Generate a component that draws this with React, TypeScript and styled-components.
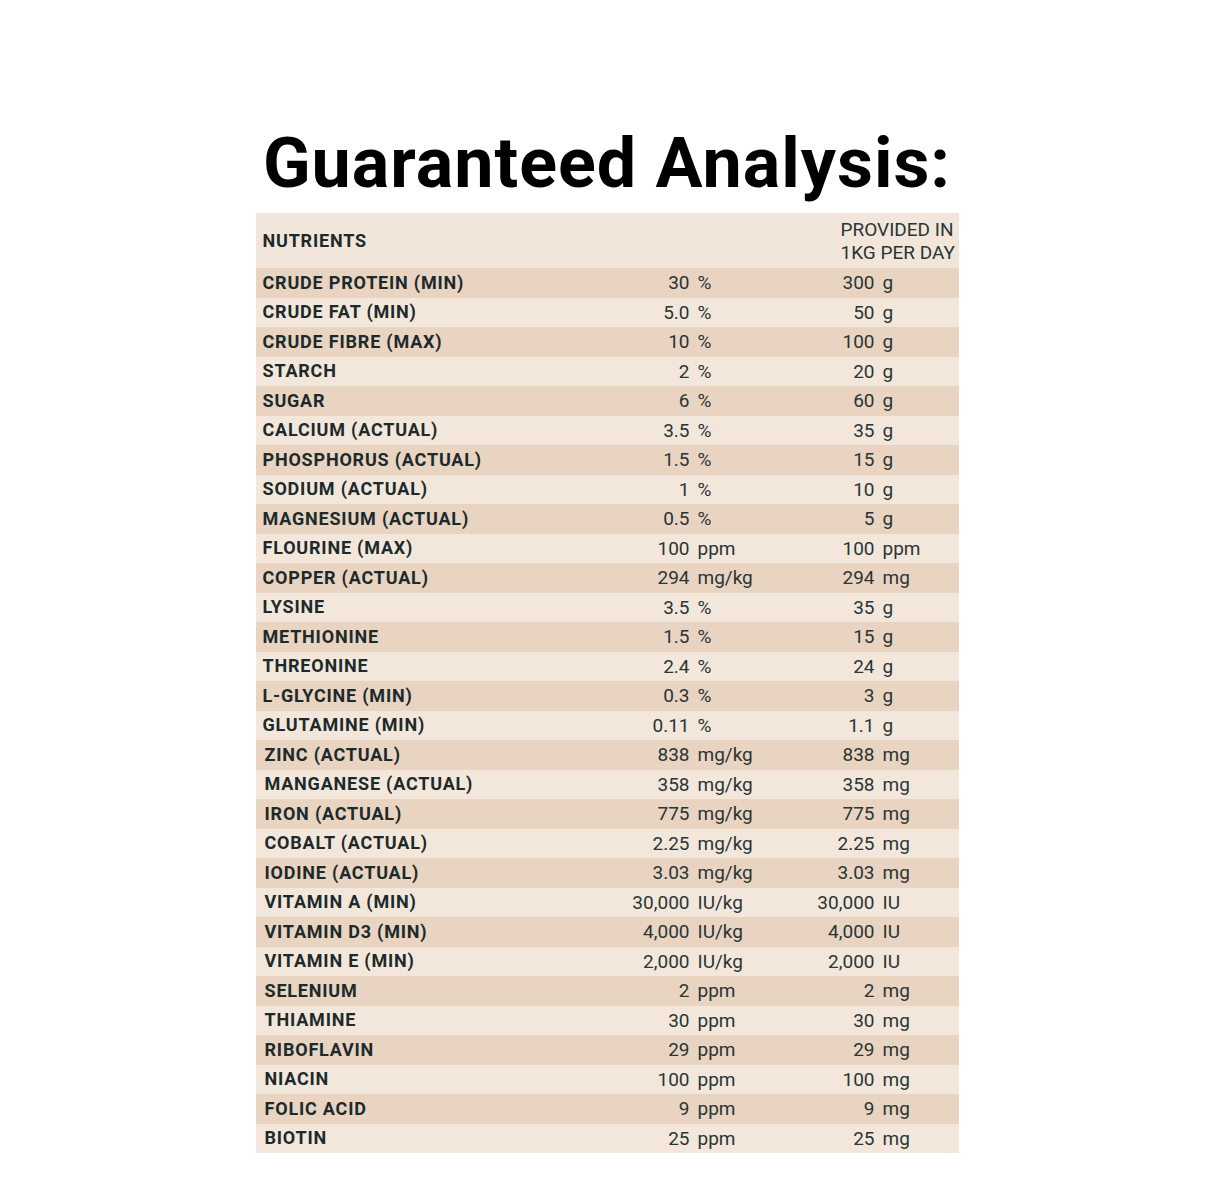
import styled, { createGlobalStyle } from 'styled-components';

const GlobalStyle = createGlobalStyle`
  html, body {
    margin: 0;
    padding: 0;
    background: #ffffff;
  }
  body {
    font-family: Roboto, 'Liberation Sans', sans-serif;
  }
`;

type Nutrient = {
  name: string;
  amount: string;
  unit: string;
  daily: string;
  dailyUnit: string;
};

const MAIN: Nutrient[] = [
  { name: 'CRUDE PROTEIN (MIN)', amount: '30', unit: '%', daily: '300', dailyUnit: 'g' },
  { name: 'CRUDE FAT (MIN)', amount: '5.0', unit: '%', daily: '50', dailyUnit: 'g' },
  { name: 'CRUDE FIBRE (MAX)', amount: '10', unit: '%', daily: '100', dailyUnit: 'g' },
  { name: 'STARCH', amount: '2', unit: '%', daily: '20', dailyUnit: 'g' },
  { name: 'SUGAR', amount: '6', unit: '%', daily: '60', dailyUnit: 'g' },
  { name: 'CALCIUM (ACTUAL)', amount: '3.5', unit: '%', daily: '35', dailyUnit: 'g' },
  { name: 'PHOSPHORUS (ACTUAL)', amount: '1.5', unit: '%', daily: '15', dailyUnit: 'g' },
  { name: 'SODIUM (ACTUAL)', amount: '1', unit: '%', daily: '10', dailyUnit: 'g' },
  { name: 'MAGNESIUM (ACTUAL)', amount: '0.5', unit: '%', daily: '5', dailyUnit: 'g' },
  { name: 'FLOURINE (MAX)', amount: '100', unit: 'ppm', daily: '100', dailyUnit: 'ppm' },
  { name: 'COPPER (ACTUAL)', amount: '294', unit: 'mg/kg', daily: '294', dailyUnit: 'mg' },
  { name: 'LYSINE', amount: '3.5', unit: '%', daily: '35', dailyUnit: 'g' },
  { name: 'METHIONINE', amount: '1.5', unit: '%', daily: '15', dailyUnit: 'g' },
  { name: 'THREONINE', amount: '2.4', unit: '%', daily: '24', dailyUnit: 'g' },
  { name: 'L-GLYCINE (MIN)', amount: '0.3', unit: '%', daily: '3', dailyUnit: 'g' },
  { name: 'GLUTAMINE (MIN)', amount: '0.11', unit: '%', daily: '1.1', dailyUnit: 'g' },
];

const TRACE: Nutrient[] = [
  { name: 'ZINC (ACTUAL)', amount: '838', unit: 'mg/kg', daily: '838', dailyUnit: 'mg' },
  { name: 'MANGANESE (ACTUAL)', amount: '358', unit: 'mg/kg', daily: '358', dailyUnit: 'mg' },
  { name: 'IRON (ACTUAL)', amount: '775', unit: 'mg/kg', daily: '775', dailyUnit: 'mg' },
  { name: 'COBALT (ACTUAL)', amount: '2.25', unit: 'mg/kg', daily: '2.25', dailyUnit: 'mg' },
  { name: 'IODINE (ACTUAL)', amount: '3.03', unit: 'mg/kg', daily: '3.03', dailyUnit: 'mg' },
  { name: 'VITAMIN A (MIN)', amount: '30,000', unit: 'IU/kg', daily: '30,000', dailyUnit: 'IU' },
  { name: 'VITAMIN D3 (MIN)', amount: '4,000', unit: 'IU/kg', daily: '4,000', dailyUnit: 'IU' },
  { name: 'VITAMIN E (MIN)', amount: '2,000', unit: 'IU/kg', daily: '2,000', dailyUnit: 'IU' },
  { name: 'SELENIUM', amount: '2', unit: 'ppm', daily: '2', dailyUnit: 'mg' },
  { name: 'THIAMINE', amount: '30', unit: 'ppm', daily: '30', dailyUnit: 'mg' },
  { name: 'RIBOFLAVIN', amount: '29', unit: 'ppm', daily: '29', dailyUnit: 'mg' },
  { name: 'NIACIN', amount: '100', unit: 'ppm', daily: '100', dailyUnit: 'mg' },
  { name: 'FOLIC ACID', amount: '9', unit: 'ppm', daily: '9', dailyUnit: 'mg' },
  { name: 'BIOTIN', amount: '25', unit: 'ppm', daily: '25', dailyUnit: 'mg' },
];

export default function App() {
  const rows = [
    ...MAIN.map((n) => ({ ...n, indent: false })),
    ...TRACE.map((n) => ({ ...n, indent: true })),
  ];

  return (
    <>
      <GlobalStyle />
      <Page>
        <Title>Guaranteed Analysis:</Title>
        <Table>
          <HeaderRow>
            <HeaderName>NUTRIENTS</HeaderName>
            <HeaderProvided>
              <span>PROVIDED IN</span>
              <span>1KG PER DAY</span>
            </HeaderProvided>
          </HeaderRow>
          {rows.map((row, i) => (
            <Row key={row.name} $dark={i % 2 === 0}>
              <Name $indent={row.indent}>{row.name}</Name>
              <Amount>{row.amount}</Amount>
              <Unit>{row.unit}</Unit>
              <Amount>{row.daily}</Amount>
              <Unit>{row.dailyUnit}</Unit>
            </Row>
          ))}
        </Table>
      </Page>
    </>
  );
}

const Page = styled.main`
  width: 1214px;
  min-height: 1202px;
  display: flex;
  flex-direction: column;
  align-items: center;
  padding-top: 123px;
  box-sizing: border-box;
`;

const Title = styled.h1`
  margin: 0 0 10px 0;
  font-family: Roboto, 'Liberation Sans', sans-serif;
  font-weight: 700;
  font-size: 70px;
  line-height: 80px;
  color: #000000;
  letter-spacing: 1px;
`;

const Table = styled.section`
  width: 703px;
  display: flex;
  flex-direction: column;
  color: #1d2a2b;
`;

const HeaderRow = styled.div`
  height: 55px;
  display: grid;
  grid-template-columns: 1fr 118px;
  align-items: center;
  padding-left: 7px;
  background: #f2e6da;
`;

const HeaderName = styled.span`
  font-weight: 700;
  font-size: 18px;
  letter-spacing: 0.8px;
`;

const HeaderProvided = styled.div`
  display: flex;
  flex-direction: column;
  font-size: 19px;
  line-height: 23px;
  white-space: nowrap;
  color: #2a3536;
`;

const Row = styled.div<{ $dark: boolean }>`
  height: 29.5px;
  display: grid;
  grid-template-columns: 317px 110px 85px 100px 84px;
  align-items: center;
  padding-left: 7px;
  background: ${({ $dark }) => ($dark ? '#e8d4c1' : '#f3e7dc')};
  font-size: 18px;
  line-height: 1;
`;

const Name = styled.span<{ $indent: boolean }>`
  font-weight: 700;
  letter-spacing: 0.8px;
  padding-left: ${({ $indent }) => ($indent ? '2px' : '0')};
  white-space: nowrap;
`;

const Amount = styled.span`
  text-align: right;
  font-size: 19px;
  color: #2a3536;
`;

const Unit = styled.span`
  padding-left: 8px;
  font-size: 19px;
  color: #2a3536;
  white-space: nowrap;
`;
